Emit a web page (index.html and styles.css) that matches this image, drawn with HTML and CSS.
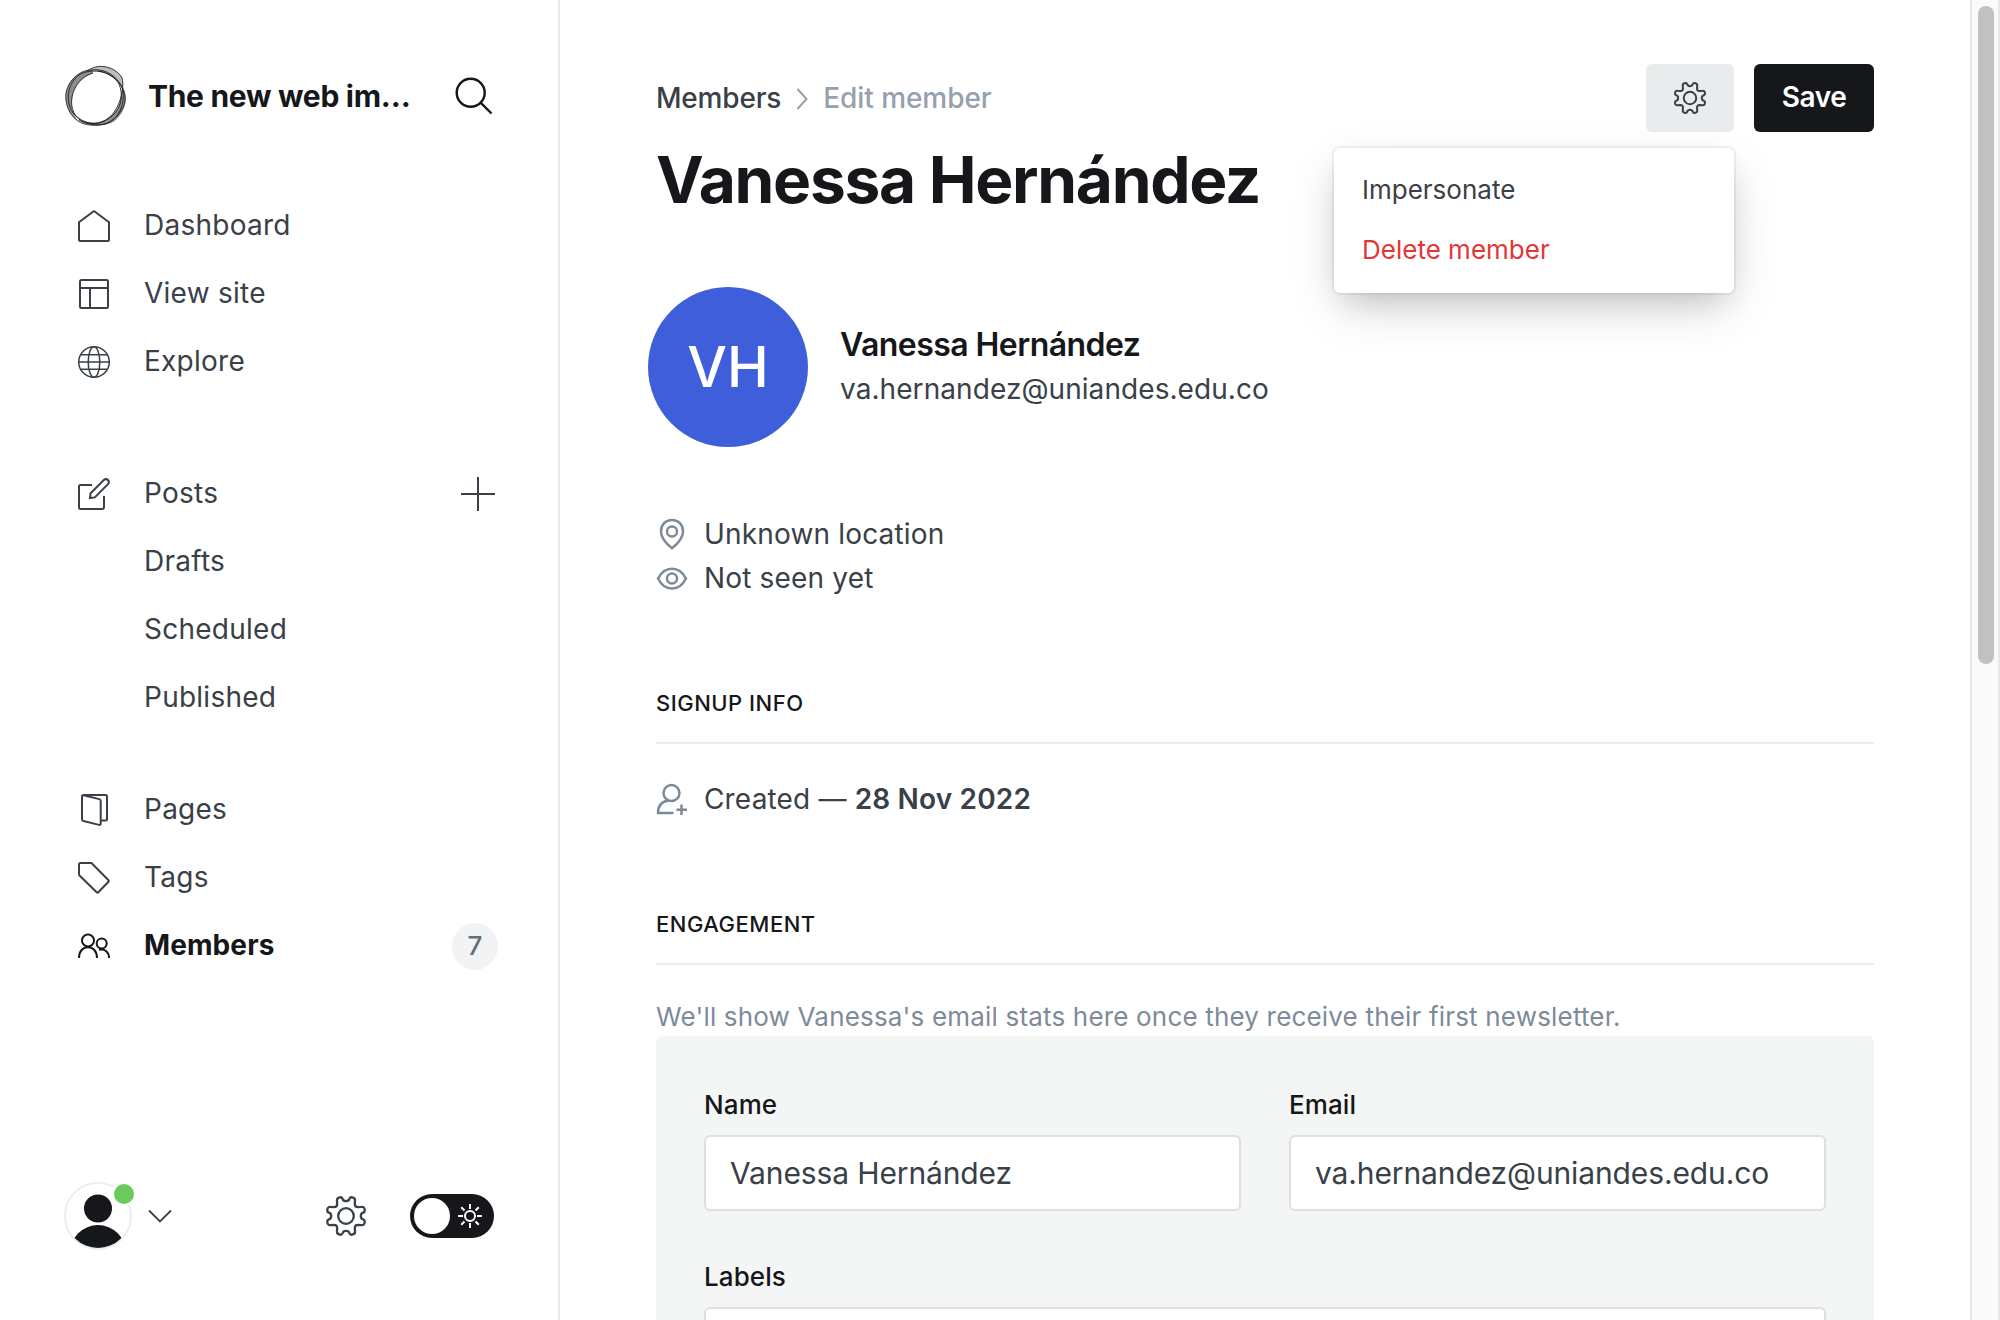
FILE: index.html
```html
<!DOCTYPE html>
<html lang="en">
<head>
<meta charset="utf-8">
<title>Edit member</title>
<link rel="stylesheet" href="styles.css">
</head>
<body>
<svg class="sprite" aria-hidden="true">
  <symbol id="gear" viewBox="0 0 40 40">
    <path d="M16.6 2.9 Q17.2 5.2 20 5.2 Q22.8 5.2 23.4 2.9 Q24.1 1 26 1.3 Q29.4 1.9 29 4.6 L28.8 8 Q28.8 11.2 32 11.2 L35.6 10.9 Q38.4 10.6 38.7 13.8 Q39 16 37.2 16.6 Q34.8 17.2 34.8 20 Q34.8 22.8 37.2 23.4 Q39 24 38.7 26.2 Q38.4 29.4 35.6 29.1 L32 28.8 Q28.8 28.8 28.8 32 L29 35.4 Q29.4 38.1 26 38.7 Q24.1 39 23.4 37.1 Q22.8 34.8 20 34.8 Q17.2 34.8 16.6 37.1 Q15.9 39 14 38.7 Q10.6 38.1 11 35.4 L11.2 32 Q11.2 28.8 8 28.8 L4.4 29.1 Q1.6 29.4 1.3 26.2 Q1 24 2.8 23.4 Q5.2 22.8 5.2 20 Q5.2 17.2 2.8 16.6 Q1 16 1.3 13.8 Q1.6 10.6 4.4 10.9 L8 11.2 Q11.2 11.2 11.2 8 L11 4.6 Q10.6 1.9 14 1.3 Q15.9 1 16.6 2.9Z"/>
    <circle cx="20" cy="20" r="7.8"/>
  </symbol>
</svg>
<div class="app">
  <aside class="sidebar">
    <header class="site">
      <svg class="logo" viewBox="0 0 62 62">
        <g class="logo-bands">
          <path class="pale" d="M22 6C28 2 33 1 38 1.500C46 2 54 7 57 13C59 17 58 22 57.500 25C55 18 51 14 46 11C39 7 32 6.500 22 6Z"/>
          <path d="M28 5C19 5 12 9 7 15C2 21 0 29 1 35C2 44 6 51 13 56C8 49 6 42 7 34C8 24 13 14 28 8Z"/>
          <path d="M57 21C61 27 62 34 60 40C58 47 53 55 46 58C36 62 23 61 13 54C26 60 38 58 46 51C53 46 57 36 57 21Z"/>
        </g>
        <g class="logo-lines">
          <path d="M26 5C19 5 12 9 7 15C2 21 0 29 1 35C2 44 6 51 13 56C20 61 32 61 40 59C49 56 56 48 59 40C61 33 60 28 57 22C53 14 45 6 34 5C31 4.600 28 4.600 26 5Z"/>
          <path d="M22 6C28 2 33 1 38 1.500C46 2 54 7 57 13C59 19 57 31 54 38C50 49 40 59 29 58.500C18 58 8 51 5 42C1 31 4 17 14 10C20 6 30 5 38 7C48 10 56 17 58 26C60 38 54 52 45 57C35 62 22 60 14 55"/>
          <path d="M28 8C17 11 9 21 7 32C5 44 10 54 20 57.500C31 61 43 56 50 48C57 40 58 28 54 19C50 12 41 7 33 6"/>
        </g>
      </svg>
      <div class="site-name">The new web im…</div>
      <svg class="search" viewBox="0 0 38 38"><circle cx="15.700" cy="15.700" r="14"/><path d="M25.600 25.600L36.500 36.500"/></svg>
    </header>

    <nav class="nav">
      <ul class="group">
        <li><svg class="icon" viewBox="0 0 32 32"><path d="M1 12.200V29.500Q1 31 2.500 31H29.500Q31 31 31 29.500V12.200L17 1.700Q16 .8 15 1.700Z"/></svg><span>Dashboard</span></li>
        <li><svg class="icon" viewBox="0 0 32 32"><rect x="2" y="2" width="28" height="28" rx="1.500"/><path d="M2 10H30M12 10V30"/></svg><span>View site</span></li>
        <li><svg class="icon fine" viewBox="0 0 32 32"><circle cx="16" cy="16" r="15.300"/><ellipse cx="16" cy="16" rx="5.800" ry="15.300"/><path d="M.7 16H31.300M2.500 8.700H29.500M2.500 23.300H29.500"/></svg><span>Explore</span></li>
      </ul>
      <ul class="group">
        <li><svg class="icon" viewBox="0 0 32 32"><path d="M14 7H2.500Q1 7 1 8.500V29.500Q1 31 2.500 31H24Q26 31 26 29V18"/><path d="M12 20L12.600 15.200L25.800 2Q28 .2 30 2Q31.800 4 30 6.200L16.800 19.400Z"/></svg><span>Posts</span><svg class="plus" viewBox="0 0 34 34"><path d="M17 0V34M0 17H34"/></svg></li>
        <li class="sub"><span>Drafts</span></li>
        <li class="sub"><span>Scheduled</span></li>
        <li class="sub"><span>Published</span></li>
      </ul>
      <ul class="group">
        <li><svg class="icon" viewBox="0 0 32 32"><path d="M5.500 1.200L21.300 5.100Q22.700 5.500 22.700 7V29.500Q22.700 31.300 21 30.900L5.500 27Q4 26.600 4 25V2.500Q4 1 5.500 1H27.500Q29 1 29 2.500V25Q29 26.500 27.500 26.500H23"/></svg><span>Pages</span></li>
        <li><svg class="icon" viewBox="0 0 32 32"><path d="M1 2.500Q1 1 2.500 1H13.500L30.500 18.200Q31.200 19 30.500 19.800L20.300 30.200Q19.500 31 18.700 30.200L1.500 13.500Q1 13 1 12Z"/></svg><span>Tags</span></li>
        <li class="active"><svg class="icon" viewBox="0 0 32 32"><circle cx="10" cy="10.500" r="6"/><circle cx="23.700" cy="13.500" r="5"/><path d="M1 28C1 21 5 17.300 10 17.300S19 21 19 28M21 19.700C27 18.500 31 22 31 28"/></svg><span>Members</span><b class="count">7</b></li>
      </ul>
    </nav>

    <footer class="tools">
      <div class="user">
        <svg class="user-pic" viewBox="0 0 68 68"><defs><clipPath id="face"><circle cx="34" cy="34" r="32"/></clipPath></defs><circle class="ring" cx="34" cy="34" r="33"/><g clip-path="url(#face)"><circle cx="34" cy="26.500" r="14"/><circle cx="34" cy="71" r="28"/></g></svg>
        <i class="status"></i>
      </div>
      <svg class="chevron" viewBox="0 0 24 14"><path d="M1 1.500L12 12.500L23 1.500"/></svg>
      <svg class="settings"><use href="#gear"/></svg>
      <div class="toggle"><i class="knob"></i><svg class="sun" viewBox="0 0 24 24"><circle cx="12" cy="12" r="5"/><path d="M12 0V5M12 19V24M0 12H5M19 12H24M3.200 3.200L6.500 6.500M17.500 17.500L20.800 20.800M3.200 20.800L6.500 17.500M17.500 6.500L20.800 3.200"/></svg></div>
    </footer>
  </aside>

  <main class="main">
    <header class="head">
      <div class="crumbs"><span>Members</span><svg viewBox="0 0 12 22"><path d="M1.500 1L10.500 11L1.500 21"/></svg><span class="here">Edit member</span></div>
      <div class="actions">
        <div class="gear-btn">
          <svg><use href="#gear"/></svg>
          <div class="menu"><div>Impersonate</div><div class="danger">Delete member</div></div>
        </div>
        <div class="save">Save</div>
      </div>
    </header>
    <h1>Vanessa Hernández</h1>

    <section class="profile">
      <div class="avatar">VH</div>
      <div class="who"><h3>Vanessa Hernández</h3><p class="mail">va.hernandez@uniandes.edu.co</p></div>
    </section>

    <section class="facts">
      <p><svg viewBox="0 0 32 32"><path d="M16 30.300C10 25.500 5 20 5 13.500C5 6.500 9.500 2 16 2S27 6.500 27 13.500C27 20 22 25.500 16 30.300Z"/><circle cx="16" cy="13.500" r="5"/></svg>Unknown location</p>
      <p><svg viewBox="0 0 32 32"><path d="M2 16.500C5.500 10 10 6.800 16 6.800S26.500 10 30 16.500C26.500 23.500 22 26.500 16 26.500S5.500 23.500 2 16.500Z"/><circle cx="16" cy="16.500" r="5"/></svg>Not seen yet</p>
    </section>

    <h4 class="signup">Signup info</h4>
    <p class="created"><svg viewBox="0 0 32 32"><circle cx="15.500" cy="10" r="8"/><path d="M17.500 30H2C2 23 6 18.500 12.500 17.500M25.500 21.500V32M20.500 26.700H31"/></svg><span>Created — <b>28 Nov 2022</b></span></p>

    <h4>Engagement</h4>
    <p class="note">We'll show Vanessa's email stats here once they receive their first newsletter.</p>

    <section class="panel">
      <div class="field"><label>Name</label><div class="input">Vanessa Hernández</div></div>
      <div class="field"><label>Email</label><div class="input">va.hernandez@uniandes.edu.co</div></div>
      <div class="field wide"><label>Labels</label><div class="input cut"></div></div>
    </section>
  </main>
  <div class="scroll"><i class="thumb"></i></div>
</div>
</body>
</html>
```

FILE: styles.css
```css
* { box-sizing: border-box; margin: 0; padding: 0; }
body { height: 1320px; overflow: hidden; background: #fff; font-family: Inter, sans-serif; font-size: 28px; color: #394047; }
svg { flex: none; display: block; fill: none; stroke: currentColor; stroke-width: 2; overflow: visible; }
i { display: block; }
.sprite { position: absolute; width: 0; height: 0; }
.app { display: flex; width: 2000px; height: 1320px; overflow: hidden; }

.sidebar { width: 560px; flex: none; border-right: 2px solid #e8e9ea; display: flex; flex-direction: column; }
.site { display: flex; align-items: center; height: 62px; margin: 65px 0 0 65px; }
.logo { width: 62px; height: 62px; }
.logo-bands { fill: #333; stroke: none; opacity: .55; }
.logo-bands .pale { fill: #888; }
.logo-lines { stroke: #222; stroke-width: .9; }
.site-name { width: 307px; margin-left: 21px; font-size: 30px; font-weight: 700; letter-spacing: -.3px; color: #15171a; white-space: nowrap; }
.search { width: 38px; height: 38px; color: #15171a; stroke-width: 2.4; }

.nav { margin-top: 65px; color: #394047; }
.group { list-style: none; margin-bottom: 64px; }
.group + .group { margin-bottom: 44px; }
.group li { display: flex; align-items: center; height: 68px; padding-left: 78px; letter-spacing: .25px; }
.group li span { margin: 0 0 2px 34px; }
.group .sub { padding-left: 110px; }
.icon { width: 32px; height: 32px; }
.fine { stroke-width: 1.5; }
.plus { width: 34px; height: 34px; margin: 0 63px 0 auto; }
.group .active { font-weight: 700; color: #15171a; letter-spacing: .1px; }
.count { width: 46px; height: 47px; margin: 0 60px 0 auto; border-radius: 50%; background: #f1f3f4; color: #626d79; font-size: 26px; font-weight: 500; line-height: 46px; text-align: center; }

.tools { display: flex; align-items: center; height: 68px; margin: auto 0 70px 64px; }
.user { position: relative; width: 68px; height: 68px; }
.user-pic { width: 68px; height: 68px; fill: #15171a; stroke: none; }
.ring { fill: #fff; stroke: #ebeef0; stroke-width: 2; }
.status { position: absolute; right: -4px; top: 0; width: 24px; height: 24px; border: 2px solid #fff; border-radius: 50%; background: #69cb5c; }
.chevron { width: 24px; height: 14px; margin-left: 16px; stroke-width: 1.8; }
.settings { width: 40px; height: 40px; margin-left: 154px; stroke-width: 2.3; }
.toggle { display: flex; align-items: center; width: 84px; height: 44px; margin-left: 44px; padding-left: 4px; border-radius: 22px; background: #15171a; color: #fff; }
.knob { width: 36px; height: 36px; border-radius: 50%; background: #fff; }
.sun { width: 24px; height: 24px; margin-left: 8px; }

.main { flex: 1; padding: 64px 96px 0; }
.head { display: flex; justify-content: space-between; height: 68px; }
.crumbs { display: flex; align-items: center; font-weight: 500; letter-spacing: -.2px; }
.crumbs span { margin-bottom: 1px; }
.crumbs svg { width: 12px; height: 22px; margin: 2px 15px 0; color: #95a1ad; }
.crumbs .here { color: #95a1ad; letter-spacing: -.05px; }
.actions { display: flex; gap: 20px; }
.gear-btn { position: relative; width: 88px; height: 68px; padding: 18px 28px; border-radius: 6px; background: #e9ebec; }
.gear-btn > svg { width: 32px; height: 32px; stroke-width: 2.5; }
.save { width: 120px; height: 68px; border-radius: 6px; background: #15171a; color: #fff; font-weight: 600; line-height: 67px; letter-spacing: -.4px; text-align: center; }
.menu { position: absolute; right: 0; top: 84px; width: 400px; height: 145px; padding: 12px 28px; border-radius: 6px; background: #fff; font-size: 26px; line-height: 60px; box-shadow: 0 0 0 2px rgba(0,0,0,.05), 0 14px 30px -10px rgba(0,0,0,.16), 0 18px 50px -4px rgba(0,0,0,.15); }
.danger { color: #e53535; }
h1 { margin-top: 8px; height: 80px; line-height: 80px; font-size: 64px; font-weight: 700; letter-spacing: -1.3px; color: #15171a; }

.profile { display: flex; align-items: center; gap: 32px; margin: 67px 0 0 -8px; height: 160px; }
.avatar { width: 160px; height: 160px; border-radius: 50%; background: #3f5fda; color: #fff; font-size: 56px; font-weight: 500; line-height: 160px; text-align: center; }
.who { margin-bottom: 5px; }
h3 { font-size: 32px; font-weight: 600; line-height: 48px; letter-spacing: -.55px; color: #15171a; }
.mail { line-height: 40px; letter-spacing: .07px; }
.facts { margin-top: 65px; }
.facts p, .created { display: flex; align-items: center; gap: 16px; height: 44px; letter-spacing: .17px; }
.facts svg, .created svg { width: 32px; height: 32px; color: #7c8b9a; stroke-width: 2.5; }
h4 { height: 60px; line-height: 39px; border-bottom: 2px solid #ebeced; font-size: 22px; font-weight: 500; letter-spacing: .5px; text-transform: uppercase; color: #15171a; }
.signup { margin-top: 84px; }
.created { margin: 33px 0 84px; }
.created b { font-weight: 600; }
.note { height: 71px; padding-top: 32px; font-size: 26px; line-height: 40px; letter-spacing: .18px; color: #7c8b9a; }
.panel { display: grid; grid-template-columns: 1fr 1fr; column-gap: 48px; row-gap: 45px; height: 284px; padding: 48px 48px 0; align-content: start; border-radius: 6px 6px 0 0; background: #f4f6f6; }
.wide { grid-column: 1 / 3; }
label { display: block; height: 51px; line-height: 42px; font-size: 26px; font-weight: 500; letter-spacing: .1px; color: #15171a; }
.input { height: 76px; padding-left: 24px; border: 2px solid #dddfe0; border-radius: 6px; background: #fff; font-size: 30px; line-height: 72px; letter-spacing: -.12px; }
.cut { height: 13px; border-bottom: 0; border-radius: 6px 6px 0 0; }
.scroll { width: 30px; padding: 6px 0 0 6px; border: solid #e8e8e8; border-width: 0 2px; background: #fafafa; }
.thumb { width: 16px; height: 658px; border-radius: 8px; background: #c1c1c1; }
```
